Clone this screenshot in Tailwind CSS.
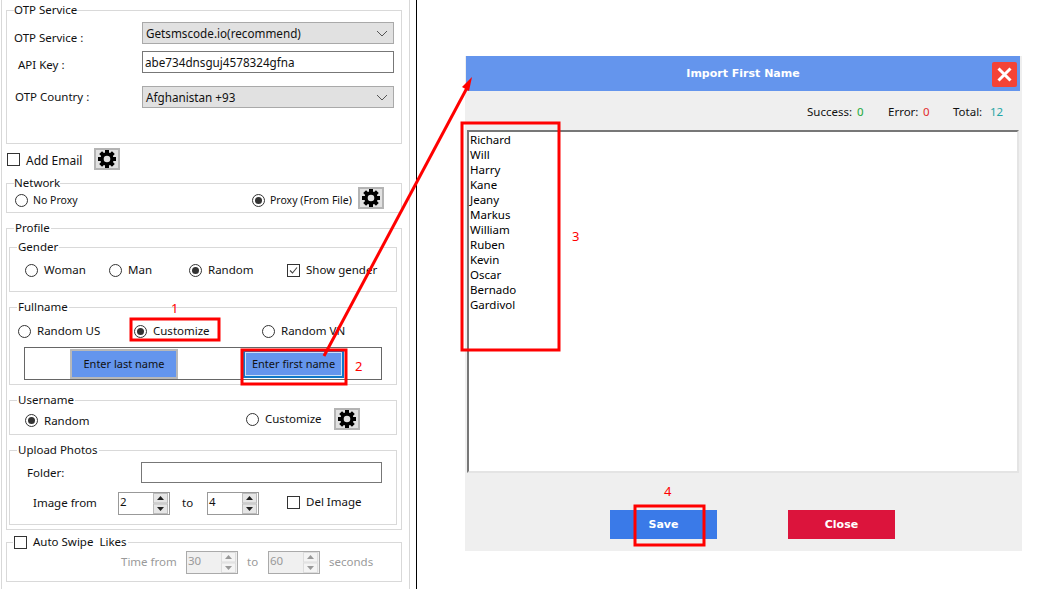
<!DOCTYPE html>
<html lang="en">
<head>
    <meta charset="UTF-8">
    <title>Import First Name</title>
    <script src="https://cdn.jsdelivr.net/npm/@tailwindcss/browser@4"></script>
</head>
<body class="bg-white">
<svg class="hidden">
    <symbol id="gear" viewBox="0 0 20 20">
        <circle cx="10" cy="10" r="5" fill="none" stroke="#000" stroke-width="3.4"/>
        <path fill="#000" d="M8 1h4v4H8zM8 15h4v4H8zM1 8h4v4H1zM15 8h4v4h-4z"/>
        <path fill="#000" transform="rotate(45 10 10)" d="M8 1h4v4H8zM8 15h4v4H8zM1 8h4v4H1zM15 8h4v4h-4z"/>
    </symbol>
    <symbol id="spin" viewBox="0 0 15 21">
        <rect x="0.5" y="0.5" width="14" height="9.5" fill="#e6e6e6" stroke="#bbb"/>
        <rect x="0.5" y="11" width="14" height="9.5" fill="#e6e6e6" stroke="#bbb"/>
        <path d="M7.5 3l3.5 4H4z" fill="#222"/>
        <path d="M4 14h7l-3.5 4z" fill="#222"/>
    </symbol>
    <symbol id="spin-off" viewBox="0 0 15 21">
        <rect x="0.5" y="0.5" width="14" height="9.5" fill="#f4f4f4" stroke="#ddd"/>
        <rect x="0.5" y="11" width="14" height="9.5" fill="#f4f4f4" stroke="#ddd"/>
        <path d="M7.5 3l3.5 4H4z" fill="#999"/>
        <path d="M4 14h7l-3.5 4z" fill="#999"/>
    </symbol>
</svg>
<div class="relative flex w-[1040px] h-[589px] overflow-hidden font-['Noto_Sans',sans-serif] text-[11.5px] leading-[16px] text-[#111]">

    <!-- left settings panel -->
    <div class="w-[417px] h-full shrink-0 border-r border-black">
        <div class="w-[409px] h-full ml-px border-x border-[#d8d8d8] pl-[4px] pt-[2px]">

            <fieldset class="w-[396px] h-[142px] border border-[#d9d9d9] pl-[7px]">
                <legend>OTP Service</legend>
                <div class="flex items-center h-[22px] mt-[4px]">
                    <span class="w-[128px] mt-[10px]">OTP Service :</span>
                    <div class="w-[252px] h-[22px] bg-[#e1e1e1] border border-[#a9a9a9] flex items-center justify-between pl-[3px] pr-[5px] text-[11.7px]">Getsmscode.io(recommend)
                        <svg width="12" height="7" viewBox="0 0 12 7"><path d="M1 1l5 5 5-5" fill="none" stroke="#555" stroke-width="1"/></svg>
                    </div>
                </div>
                <div class="flex items-center h-[22px] mt-[7px]">
                    <span class="w-[124px] pl-[4px] mt-[6px]">API Key :</span>
                    <div class="w-[252px] h-[22px] ml-[4px] bg-white border border-[#777] flex items-center pl-[2px] text-[11.7px]">abe734dnsguj4578324gfna</div>
                </div>
                <div class="flex items-center h-[22px] mt-[13px]">
                    <span class="w-[128px] pl-[1px]">OTP Country :</span>
                    <div class="w-[252px] h-[22px] bg-[#e1e1e1] border border-[#a9a9a9] flex items-center justify-between pl-[3px] pr-[5px] text-[11.7px]">Afghanistan +93
                        <svg width="12" height="7" viewBox="0 0 12 7"><path d="M1 1l5 5 5-5" fill="none" stroke="#555" stroke-width="1"/></svg>
                    </div>
                </div>
            </fieldset>

            <div class="flex items-center h-[22px] mt-[4px] pl-[1px]">
                <span class="w-[13px] h-[13px] border border-[#333] bg-white"></span>
                <span class="ml-[6px] w-[68px] mt-[3px] text-[12px]">Add Email</span>
                <span class="w-[26px] h-[22px] bg-[#e1e1e1] border-2 border-[#b4b4b4] flex items-center justify-center"><svg width="20" height="20"><use href="#gear"/></svg></span>
            </div>

            <fieldset class="w-[396px] h-[38px] mt-[5px] border border-[#d9d9d9] pl-[8px]">
                <legend class="-ml-[1px]">Network</legend>
                <div class="flex items-center h-[16px] mt-[1px] text-[10.5px]">
                    <span class="w-[13px] h-[13px] rounded-full border border-[#333]"></span>
                    <span class="ml-[5px] w-[219px]">No Proxy</span>
                    <span class="w-[13px] h-[13px] rounded-full border border-[#333] flex items-center justify-center"><span class="w-[7px] h-[7px] rounded-full bg-[#333]"></span></span>
                    <span class="ml-[5px] w-[88px]">Proxy (From File)</span>
                    <span class="w-[26px] h-[22px] -mt-[4px] bg-[#e1e1e1] border-2 border-[#b4b4b4] flex items-center justify-center"><svg width="20" height="20"><use href="#gear"/></svg></span>
                </div>
            </fieldset>

            <fieldset class="w-[396px] h-[310px] mt-[7px] border border-[#d9d9d9] pl-[2px]">
                <legend class="ml-[5px] px-[1px]">Profile</legend>

                <fieldset class="w-[388px] h-[53px] mt-[3px] border border-[#d9d9d9] pl-[15px]">
                    <legend class="-ml-[8px] px-[1px]">Gender</legend>
                    <div class="flex items-center h-[16px] mt-[7px]">
                        <span class="w-[13px] h-[13px] rounded-full border border-[#333]"></span>
                        <span class="ml-[6px] w-[65px]">Woman</span>
                        <span class="w-[13px] h-[13px] rounded-full border border-[#333]"></span>
                        <span class="ml-[6px] w-[61px]">Man</span>
                        <span class="w-[13px] h-[13px] rounded-full border border-[#333] flex items-center justify-center"><span class="w-[7px] h-[7px] rounded-full bg-[#333]"></span></span>
                        <span class="ml-[6px] w-[79px]">Random</span>
                        <span class="w-[13px] h-[13px] border border-[#333] flex items-center justify-center"><svg width="11" height="11" viewBox="0 0 11 11"><path d="M2 5.5l2.5 2.5 4.5-5.5" fill="none" stroke="#444" stroke-width="1.1"/></svg></span>
                        <span class="ml-[6px]">Show gender</span>
                    </div>
                </fieldset>

                <fieldset class="w-[388px] h-[86px] mt-[7px] border border-[#d9d9d9] pl-[8px]">
                    <legend class="-ml-[1px] px-[1px]">Fullname</legend>
                    <div class="flex items-center h-[16px] mt-[8px]">
                        <span class="w-[13px] h-[13px] rounded-full border border-[#333]"></span>
                        <span class="ml-[6px] w-[97px]">Random US</span>
                        <span class="w-[13px] h-[13px] rounded-full border border-[#333] flex items-center justify-center"><span class="w-[7px] h-[7px] rounded-full bg-[#333]"></span></span>
                        <span class="ml-[6px] w-[109px]">Customize</span>
                        <span class="w-[13px] h-[13px] rounded-full border border-[#333]"></span>
                        <span class="ml-[6px]">Random VN</span>
                    </div>
                    <div class="w-[358px] h-[33px] mt-[8px] ml-[6px] border border-[#666] flex items-center text-[11px]">
                        <span class="ml-[45px] w-[108px] h-[30px] pt-[1px] bg-[#6495ed] border-2 border-[#b8b8b8] flex items-center justify-center">Enter last name</span>
                        <span class="ml-[65px] w-[101px] h-[28px] pt-[1px] bg-[#6495ed] border-2 border-[#0f78c8] flex items-center justify-center outline outline-1 -outline-offset-3 outline-[#cfe0f5]">Enter first name</span>
                    </div>
                </fieldset>

                <fieldset class="w-[388px] h-[43px] mt-[7px] border border-[#d9d9d9] pl-[15px]">
                    <legend class="-ml-[8px] px-[1px]">Username</legend>
                    <div class="flex items-center h-[24px] -mt-[1px]">
                        <span class="w-[13px] h-[13px] mt-[3px] rounded-full border border-[#333] flex items-center justify-center"><span class="w-[7px] h-[7px] rounded-full bg-[#333]"></span></span>
                        <span class="ml-[6px] mt-[3px] w-[202px]">Random</span>
                        <span class="w-[13px] h-[13px] rounded-full border border-[#333]"></span>
                        <span class="ml-[6px] w-[69px]">Customize</span>
                        <span class="w-[26px] h-[22px] bg-[#e1e1e1] border-2 border-[#b4b4b4] flex items-center justify-center"><svg width="20" height="20"><use href="#gear"/></svg></span>
                    </div>
                </fieldset>

                <fieldset class="w-[388px] h-[83px] mt-[7px] border border-[#d9d9d9]">
                    <legend class="ml-[7px] px-[1px]">Upload Photos</legend>
                    <div class="flex items-center h-[21px] mt-[4px]">
                        <span class="ml-[17px] w-[114px]">Folder:</span>
                        <div class="w-[241px] h-[21px] border border-[#777] bg-white"></div>
                    </div>
                    <div class="flex items-center h-[23px] mt-[9px]">
                        <span class="ml-[23px] w-[85px] mb-[2px]">Image from</span>
                        <div class="w-[52px] h-[23px] border border-[#999] flex justify-between pl-[1px] leading-[18px]">2
                            <svg width="15" height="21" class="mr-[1px]"><use href="#spin"/></svg>
                        </div>
                        <span class="ml-[12px] w-[25px] mb-[2px]">to</span>
                        <div class="w-[52px] h-[23px] border border-[#999] flex justify-between pl-[1px] leading-[18px]">4
                            <svg width="15" height="21" class="mr-[1px]"><use href="#spin"/></svg>
                        </div>
                        <span class="ml-[28px] w-[13px] h-[13px] mb-[3px] border border-[#333]"></span>
                        <span class="ml-[6px] mb-[4px]">Del Image</span>
                    </div>
                </fieldset>
            </fieldset>

            <fieldset class="w-[396px] h-[48px] mt-[4px] border border-[#d9d9d9]">
                <legend class="ml-[6px] px-[1px] flex items-center">
                    <span class="w-[13px] h-[13px] border border-[#333]"></span>
                    <span class="ml-[6px]">Auto Swipe&nbsp; Likes</span>
                </legend>
                <div class="flex items-center h-[23px] mt-px text-[#9a9a9a]">
                    <span class="ml-[114px] w-[65px] mb-[2px]">Time from</span>
                    <div class="w-[52px] h-[23px] border border-[#aaa] bg-[#f0f0f0] flex justify-between pl-[1px] leading-[18px]">30
                        <svg width="15" height="21" class="mr-[1px]"><use href="#spin-off"/></svg>
                    </div>
                    <span class="ml-[9px] w-[21px] mb-[2px]">to</span>
                    <div class="w-[52px] h-[23px] border border-[#aaa] bg-[#f0f0f0] flex justify-between pl-[1px] leading-[18px]">60
                        <svg width="15" height="21" class="mr-[1px]"><use href="#spin-off"/></svg>
                    </div>
                    <span class="ml-[9px] mb-[2px]">seconds</span>
                </div>
            </fieldset>
        </div>
    </div>

    <!-- import dialog -->
    <div class="ml-[48px] mt-[56px] w-[557px] h-[495px] bg-[#efefef] flex flex-col">
        <div class="h-[35px] w-[554px] ml-px shrink-0 bg-[#6495ed] flex items-center justify-center relative">
            <span class="font-['DejaVu_Sans',sans-serif] font-bold text-white text-[11px]">Import First Name</span>
            <span class="absolute right-[3px] top-[6px] w-[25px] h-[25px] rounded-[2px] bg-[#f44336] flex items-center justify-center">
                <svg width="15" height="15" viewBox="0 0 15 15"><path d="M1.5 1.5l12 12M13.5 1.5l-12 12" stroke="#fff" stroke-width="3"/></svg>
            </span>
        </div>
        <div class="h-[39px] shrink-0 flex items-center pl-[342px] pt-[2px]">
            <span class="w-[50px]">Success:</span>
            <span class="w-[31px] text-[#22aa3a]">0</span>
            <span class="w-[35px]">Error:</span>
            <span class="w-[30px] text-[#e22b2b]">0</span>
            <span class="w-[37px]">Total:</span>
            <span class="text-[#1fa6a6]">12</span>
        </div>
        <div class="w-[552px] h-[343px] shrink-0 ml-[2px] bg-white border-2 border-t-[#777] border-l-[#777] border-r-[#e4e4e4] border-b-[#e4e4e4] pl-[1px] leading-[15px] text-black">
            <div>Richard</div>
            <div>Will</div>
            <div>Harry</div>
            <div>Kane</div>
            <div>Jeany</div>
            <div>Markus</div>
            <div>William</div>
            <div>Ruben</div>
            <div>Kevin</div>
            <div>Oscar</div>
            <div>Bernado</div>
            <div>Gardivol</div>
        </div>
        <div class="flex mt-[37px] pl-[145px] font-['DejaVu_Sans',sans-serif] font-bold text-white text-[11px]">
            <span class="w-[107px] h-[29px] bg-[#3a7ae8] flex items-center justify-center">Save</span>
            <span class="w-[107px] h-[29px] ml-[71px] bg-[#dc143c] flex items-center justify-center">Close</span>
        </div>
    </div>

    <!-- red annotations laid over the screenshot -->
    <svg class="absolute left-0 top-0 pointer-events-none" width="1040" height="589" fill="none" stroke="#f00" stroke-width="3">
        <rect x="131" y="319" width="88" height="21"/>
        <rect x="242" y="350" width="104" height="34"/>
        <rect x="462" y="123" width="97" height="227"/>
        <rect x="635" y="506" width="69" height="39"/>
        <path d="M324 356L468 86"/>
        <path d="M472 77L462 87L469 91z" fill="#f00" stroke="none"/>
    </svg>
    <span class="absolute left-[171px] top-[300px] text-[13px] text-[#f00]">1</span>
    <span class="absolute left-[355px] top-[358px] text-[13px] text-[#f00]">2</span>
    <span class="absolute left-[572px] top-[228px] text-[13px] text-[#f00]">3</span>
    <span class="absolute left-[664px] top-[483px] text-[13px] text-[#f00]">4</span>
</div>
</body>
</html>
